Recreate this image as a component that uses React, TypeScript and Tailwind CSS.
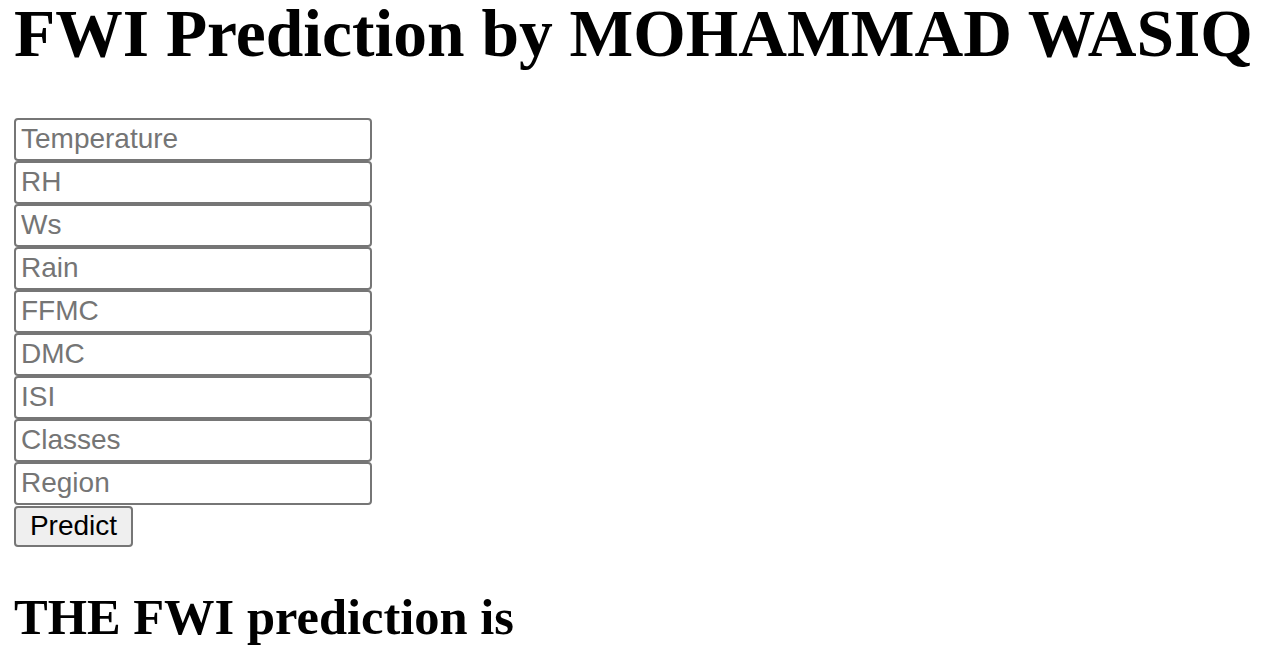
const fields = ['Temperature', 'RH', 'Ws', 'Rain', 'FFMC', 'DMC', 'ISI', 'Classes', 'Region'];

export default function App() {
  return (
    <div className="min-h-screen overflow-hidden bg-white px-[14px] text-black">
      <h1 className="-mt-[5px] mb-[45px] whitespace-nowrap font-['Liberation_Serif',serif] text-[67.5px] font-bold leading-[1.15]">
        FWI Prediction by MOHAMMAD WASIQ
      </h1>

      <form className="flex flex-col items-start" onSubmit={(e) => e.preventDefault()}>
        {fields.map((name) => (
          <input
            key={name}
            name={name}
            placeholder={name}
            className="h-[43px] w-[358px] rounded-[4px] border-2 border-[#767676] bg-white px-[5px] font-['Liberation_Sans',Arial,sans-serif] text-[28px] leading-none text-black outline-none placeholder:text-[#757575]"
          />
        ))}
        <button
          type="submit"
          className="mt-[1px] h-[41px] w-[119px] rounded-[4px] border-2 border-[#767676] bg-[#efefef] font-['Liberation_Sans',Arial,sans-serif] text-[28px] leading-none text-black"
        >
          Predict
        </button>
      </form>

      <h2 className="mt-[41px] font-['Liberation_Serif',serif] text-[50.5px] font-bold leading-[1.15]">
        THE FWI prediction is
      </h2>
    </div>
  );
}
